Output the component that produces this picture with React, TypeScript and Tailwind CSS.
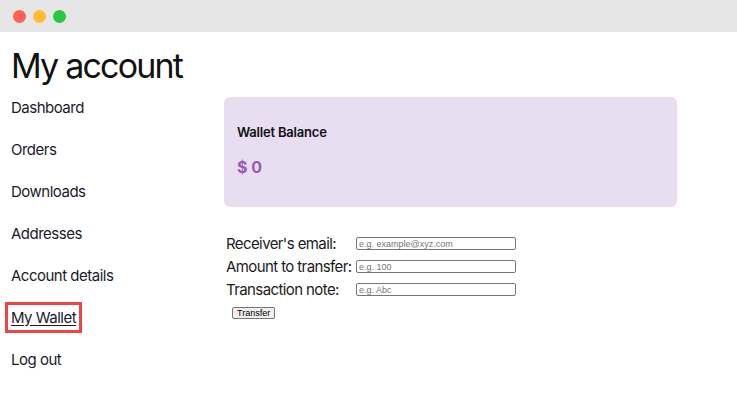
import React from "react";

const navItems = ["Dashboard", "Orders", "Downloads", "Addresses", "Account details", "My Wallet", "Log out"];

function Field({ label, placeholder }: { label: string; placeholder: string }) {
  return (
    <div className="flex items-center h-[23px]">
      <label className="w-[130px] shrink-0 whitespace-nowrap text-[15px] leading-[23px] text-[#1b1b1b] tracking-[-0.6px]">{label}</label>
      <input
        className="w-[160px] h-[13px] border border-[#767676] rounded-[2px] px-[2px] text-[9px] leading-[11px] bg-white placeholder:text-[#757575] outline-none"
        style={{ fontFamily: '"Liberation Sans", Arial, sans-serif' }}
        placeholder={placeholder}
      />
    </div>
  );
}

export default function App() {
  return (
    <div className="w-[737px] h-[417px] bg-white overflow-hidden" style={{ fontFamily: 'Inter, "Noto Sans", sans-serif' }}>
      <div className="h-[32px] bg-[#e6e6e6] flex items-center gap-[7px] pl-[13px]">
        <span className="w-[13px] h-[13px] rounded-full bg-[#fe5f57]" />
        <span className="w-[13px] h-[13px] rounded-full bg-[#febc2e]" />
        <span className="w-[13px] h-[13px] rounded-full bg-[#28c840]" />
      </div>
      <div className="px-[11px]">
        <h1 className="mt-[16px] text-[34px] leading-[36px] font-normal text-[#111] tracking-[-1.8px]">My account</h1>
        <div className="flex mt-[3px]">
          <nav className="w-[213px] shrink-0 flex flex-col">
            {navItems.map((item) => (
              <div key={item} className="h-[42px] text-[15px] leading-[42px] text-[#1a1a2a] tracking-[-0.5px]">
                {item === "My Wallet" ? (
                  <span className="underline underline-offset-[2px] outline-[3px] outline-solid outline-[#f04444] outline-offset-[3px]">{item}</span>
                ) : (
                  item
                )}
              </div>
            ))}
          </nav>
          <main className="flex-1 pt-[10px]">
            <div className="w-[453px] h-[110px] rounded-[6px] bg-[#e8ddf1] pl-[13px] pt-[27px]">
              <div className="text-[13px] leading-[16px] font-semibold text-[#111] tracking-[-0.2px]">Wallet Balance</div>
              <div className="mt-[17px] text-[16px] leading-[20px] font-bold text-[#9b59b6]">$ 0</div>
            </div>
            <div className="mt-[25px] pl-[2px]">
              <Field label="Receiver's email:" placeholder="e.g. example@xyz.com" />
              <Field label="Amount to transfer:" placeholder="e.g. 100" />
              <Field label="Transaction note:" placeholder="e.g. Abc" />
              <button
                className="mt-[6px] ml-[6px] h-[12px] px-[4px] text-[9px] leading-[10px] text-black bg-[#efefef] border border-[#767676] rounded-[2px] flex items-center"
                style={{ fontFamily: '"Liberation Sans", Arial, sans-serif' }}
              >
                Transfer
              </button>
            </div>
          </main>
        </div>
      </div>
    </div>
  );
}
